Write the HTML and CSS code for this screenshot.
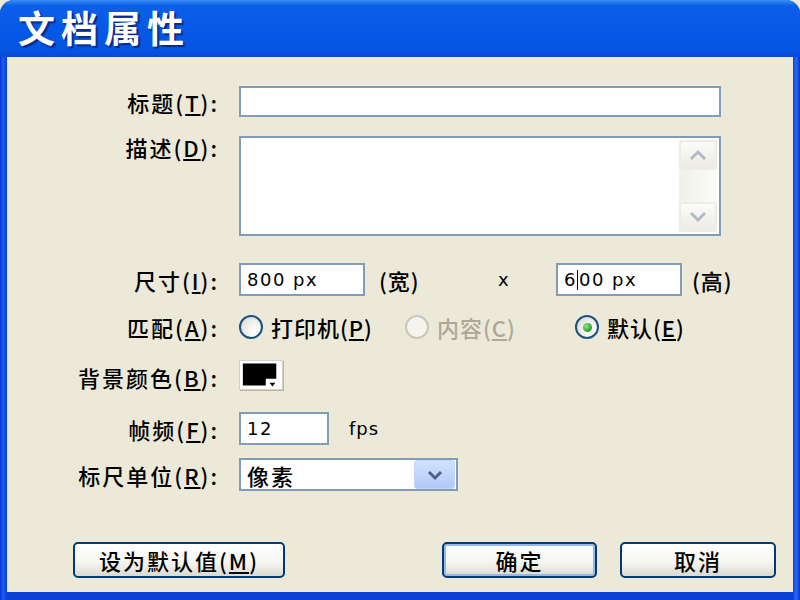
FILE: index.html
```html
<!DOCTYPE html>
<html lang="zh-CN">
<head>
    <meta charset="UTF-8">
    <title>文档属性</title>
    <link rel="stylesheet" href="styles.css">
</head>
<body>

<div class="window">
    <div class="titlebar">
        <span class="title">文档属性</span>
    </div>

    <div class="client">
        <!-- 标题 -->
        <div class="row row-title">
            <div class="lbl">标题(<u>T</u>):</div>
            <div class="field field-wide"></div>
        </div>

        <!-- 描述 -->
        <div class="row row-desc">
            <div class="lbl">描述(<u>D</u>):</div>
            <div class="field textarea">
                <div class="scrollbar">
                    <div class="sb-btn">
                        <svg width="20" height="12" viewBox="0 0 20 12"><polyline points="3,10 10,3 17,10" fill="none" stroke="#b4bac6" stroke-width="3"/></svg>
                    </div>
                    <div class="sb-track"></div>
                    <div class="sb-btn">
                        <svg width="20" height="12" viewBox="0 0 20 12"><polyline points="3,2 10,9 17,2" fill="none" stroke="#b4bac6" stroke-width="3"/></svg>
                    </div>
                </div>
            </div>
        </div>

        <!-- 尺寸 -->
        <div class="row row-size">
            <div class="lbl">尺寸(<u>I</u>):</div>
            <div class="field field-size"><span class="val">800 px</span></div>
            <span class="unit">(宽)</span>
            <span class="times">x</span>
            <div class="field field-size"><span class="val">6<span class="caret"></span>00 px</span></div>
            <span class="unit unit-h">(高)</span>
        </div>

        <!-- 匹配 -->
        <div class="row row-match">
            <div class="lbl">匹配(<u>A</u>):</div>
            <div class="radio-item r1">
                <span class="radio"></span>
                <span>打印机(<u>P</u>)</span>
            </div>
            <div class="radio-item r2 disabled">
                <span class="radio"></span>
                <span>内容(<u>C</u>)</span>
            </div>
            <div class="radio-item">
                <span class="radio checked"></span>
                <span>默认(<u>E</u>)</span>
            </div>
        </div>

        <!-- 背景颜色 -->
        <div class="row row-color">
            <div class="lbl">背景颜色(<u>B</u>):</div>
            <div class="swatch">
                <svg width="44" height="30" viewBox="0 0 44 30">
                    <polygon points="3,2 38,2 38,18 27,18 27,25 3,25" fill="#000"/>
                    <polygon points="31,22 37,22 34,26" fill="#000"/>
                </svg>
            </div>
        </div>

        <!-- 帧频 -->
        <div class="row row-fps">
            <div class="lbl">帧频(<u>F</u>):</div>
            <div class="field field-fps"><span class="val">12</span></div>
            <span class="unit unit-fps">fps</span>
        </div>

        <!-- 标尺单位 -->
        <div class="row row-ruler">
            <div class="lbl">标尺单位(<u>R</u>):</div>
            <div class="field select">
                <span class="val sel-val">像素</span>
                <div class="dd-btn">
                    <svg width="20" height="12" viewBox="0 0 20 12"><polyline points="4,3 10,9 16,3" fill="none" stroke="#4d6185" stroke-width="3"/></svg>
                </div>
            </div>
        </div>

        <!-- 按钮 -->
        <div class="buttons">
            <button class="btn btn-default-val">设为默认值(<u>M</u>)</button>
            <div class="spacer"></div>
            <button class="btn btn-ok">确定</button>
            <button class="btn btn-cancel">取消</button>
        </div>
    </div>
</div>

</body>
</html>
```

FILE: styles.css
```css
body {
    margin: 0;
    font-family: "Noto Sans CJK SC", "Noto Sans", sans-serif;
    background: #ece9d8;
}

.window {
    width: 800px;
    height: 600px;
    display: flex;
    flex-direction: column;
    background: linear-gradient(to right, #0831d9 0, #1a5fee 3px, #0a3fd6 7px, #0a3fd6 793px, #2a6af0 796px, #0831d9 800px);
    border-radius: 14px 14px 0 0;
    overflow: hidden;
}

.titlebar {
    height: 57px;
    background: linear-gradient(to bottom, #3b8cf5 0, #0a5ee8 6px, #0559e6 30px, #0454e2 50px, #0748d8 57px);
    display: flex;
    align-items: center;
    padding-left: 18px;
}

.title {
    color: #fff;
    font-size: 37px;
    font-weight: bold;
    letter-spacing: 6px;
    text-shadow: 2px 2px 1px #0a2a8a;
    margin-top: -3px;
}

.client {
    flex: 1;
    margin: 0 7px 8px 7px;
    background: #ece9d8;
    color: #000;
    font-size: 22px;
    font-weight: 500;
    line-height: 24px;
}

.row {
    display: flex;
    align-items: center;
}

.lbl {
    width: 212px;
    margin-right: 20px;
    text-align: right;
    letter-spacing: 2px;
    white-space: nowrap;
}

u {
    text-decoration: underline;
    text-underline-offset: 2px;
}

.field {
    box-sizing: border-box;
    background: #fff;
    border: 2px solid #7f9db9;
    display: flex;
    align-items: center;
}

.val {
    font-family: "DejaVu Sans", sans-serif;
    font-size: 18px;
    font-weight: normal;
    letter-spacing: 1.5px;
    padding-left: 6px;
}

.row-title {
    margin-top: 29px;
}

.field-wide {
    width: 482px;
    height: 31px;
}

.row-desc {
    margin-top: 19px;
    align-items: flex-start;
}

.row-desc .lbl {
    margin-top: -1px;
}

.textarea {
    width: 482px;
    height: 100px;
    justify-content: flex-end;
    align-items: stretch;
    padding: 2px 2px 2px 0;
}

.scrollbar {
    width: 38px;
    display: flex;
    flex-direction: column;
    background: #f4f3ee;
}

.sb-btn {
    height: 30px;
    box-sizing: border-box;
    border: 2px solid #eeede5;
    border-radius: 4px;
    background: linear-gradient(to bottom, #fbfbf9, #ecebe4);
    display: flex;
    align-items: center;
    justify-content: center;
}

.sb-track {
    flex: 1;
    background: linear-gradient(to right, #f0efe8, #fbfbf8);
}

.row-size {
    margin-top: 27px;
}

.field-size {
    width: 126px;
    height: 33px;
}

.caret {
    display: inline-block;
    width: 1px;
    height: 20px;
    background: #000;
    margin: 0 1px 0 0;
    vertical-align: -4px;
}

.unit {
    margin-left: 14px;
    width: 119px;
    letter-spacing: 1px;
}

.unit-h {
    margin-left: 10px;
    width: auto;
}

.times {
    width: 58px;
    font-family: "DejaVu Sans", sans-serif;
    font-size: 18px;
    font-weight: normal;
}

.row-match {
    margin-top: 17px;
    height: 28px;
}

.radio-item {
    display: flex;
    align-items: center;
    gap: 8px;
    letter-spacing: 1px;
    white-space: nowrap;
}

.r1 {
    width: 166px;
}

.r2 {
    width: 170px;
}

.radio {
    width: 24px;
    height: 24px;
    box-sizing: border-box;
    border-radius: 50%;
    border: 2px solid #1c5180;
    background: radial-gradient(circle at 70% 70%, #ffffff 0, #f3f2ee 40%, #d6d3c9 100%);
    display: flex;
    align-items: center;
    justify-content: center;
}

.radio.checked::after {
    content: "";
    width: 9px;
    height: 9px;
    border-radius: 50%;
    background: radial-gradient(circle at 35% 35%, #8ee68e, #21a121 70%);
}

.disabled {
    color: #aca899;
}

.disabled .radio {
    border-color: #cac8bb;
    background: #f4f3ee;
}

.row-color {
    margin-top: 19px;
}

.row-color .lbl {
    margin-top: 3px;
}

.swatch {
    width: 44px;
    height: 30px;
    box-sizing: border-box;
    background: #fff;
    border: 1px solid #d4d0c8;
    box-shadow: 1px 1px 0 #b8b4a8;
    display: flex;
}

.row-fps {
    margin-top: 22px;
}

.field-fps {
    width: 90px;
    height: 33px;
}

.unit-fps {
    margin-left: 20px;
    font-family: "DejaVu Sans", sans-serif;
    font-size: 18px;
    font-weight: normal;
}

.row-ruler {
    margin-top: 13px;
}

.select {
    width: 219px;
    height: 33px;
    justify-content: space-between;
    padding-right: 1px;
}

.sel-val {
    font-family: "Noto Sans CJK SC", sans-serif;
    font-size: 22px;
    font-weight: 500;
    letter-spacing: 2px;
}

.dd-btn {
    width: 39px;
    height: 27px;
    border-radius: 3px;
    background: linear-gradient(to bottom, #d2e1fd, #b2caf7);
    border: 1px solid #c4d5f9;
    display: flex;
    align-items: center;
    justify-content: center;
}

.buttons {
    display: flex;
    margin-top: 51px;
    padding: 0 17px 0 66px;
}

.spacer {
    flex: 1;
}

.btn {
    height: 36px;
    box-sizing: border-box;
    border: 2px solid #003c74;
    border-radius: 5px;
    background: linear-gradient(to bottom, #ffffff 0, #f4f4f0 60%, #dcd9cd 100%);
    font-family: "Noto Sans CJK SC", sans-serif;
    font-size: 22px;
    font-weight: 500;
    letter-spacing: 2px;
    color: #000;
    padding: 0;
}

.btn-default-val {
    width: 212px;
}

.btn-ok {
    width: 155px;
    box-shadow: inset 0 0 0 2px #98b8ea;
}

.btn-cancel {
    width: 156px;
    margin-left: 23px;
}
```
